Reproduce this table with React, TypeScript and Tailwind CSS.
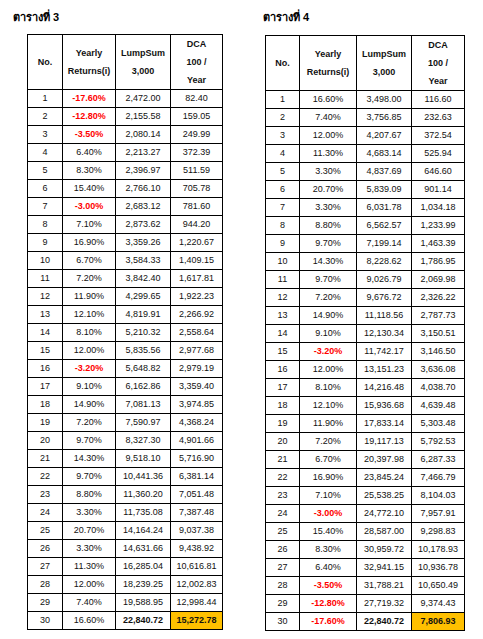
import React from "react"

type Row = [string, string, string]

const table3: Row[] = [
  ["-17.60%", "2,472.00", "82.40"],
  ["-12.80%", "2,155.58", "159.05"],
  ["-3.50%", "2,080.14", "249.99"],
  ["6.40%", "2,213.27", "372.39"],
  ["8.30%", "2,396.97", "511.59"],
  ["15.40%", "2,766.10", "705.78"],
  ["-3.00%", "2,683.12", "781.60"],
  ["7.10%", "2,873.62", "944.20"],
  ["16.90%", "3,359.26", "1,220.67"],
  ["6.70%", "3,584.33", "1,409.15"],
  ["7.20%", "3,842.40", "1,617.81"],
  ["11.90%", "4,299.65", "1,922.23"],
  ["12.10%", "4,819.91", "2,266.92"],
  ["8.10%", "5,210.32", "2,558.64"],
  ["12.00%", "5,835.56", "2,977.68"],
  ["-3.20%", "5,648.82", "2,979.19"],
  ["9.10%", "6,162.86", "3,359.40"],
  ["14.90%", "7,081.13", "3,974.85"],
  ["7.20%", "7,590.97", "4,368.24"],
  ["9.70%", "8,327.30", "4,901.66"],
  ["14.30%", "9,518.10", "5,716.90"],
  ["9.70%", "10,441.36", "6,381.14"],
  ["8.80%", "11,360.20", "7,051.48"],
  ["3.30%", "11,735.08", "7,387.48"],
  ["20.70%", "14,164.24", "9,037.38"],
  ["3.30%", "14,631.66", "9,438.92"],
  ["11.30%", "16,285.04", "10,616.81"],
  ["12.00%", "18,239.25", "12,002.83"],
  ["7.40%", "19,588.95", "12,998.44"],
  ["16.60%", "22,840.72", "15,272.78"],
]

const table4: Row[] = [
  ["16.60%", "3,498.00", "116.60"],
  ["7.40%", "3,756.85", "232.63"],
  ["12.00%", "4,207.67", "372.54"],
  ["11.30%", "4,683.14", "525.94"],
  ["3.30%", "4,837.69", "646.60"],
  ["20.70%", "5,839.09", "901.14"],
  ["3.30%", "6,031.78", "1,034.18"],
  ["8.80%", "6,562.57", "1,233.99"],
  ["9.70%", "7,199.14", "1,463.39"],
  ["14.30%", "8,228.62", "1,786.95"],
  ["9.70%", "9,026.79", "2,069.98"],
  ["7.20%", "9,676.72", "2,326.22"],
  ["14.90%", "11,118.56", "2,787.73"],
  ["9.10%", "12,130.34", "3,150.51"],
  ["-3.20%", "11,742.17", "3,146.50"],
  ["12.00%", "13,151.23", "3,636.08"],
  ["8.10%", "14,216.48", "4,038.70"],
  ["12.10%", "15,936.68", "4,639.48"],
  ["11.90%", "17,833.14", "5,303.48"],
  ["7.20%", "19,117.13", "5,792.53"],
  ["6.70%", "20,397.98", "6,287.33"],
  ["16.90%", "23,845.24", "7,466.79"],
  ["7.10%", "25,538.25", "8,104.03"],
  ["-3.00%", "24,772.10", "7,957.91"],
  ["15.40%", "28,587.00", "9,298.83"],
  ["8.30%", "30,959.72", "10,178.93"],
  ["6.40%", "32,941.15", "10,936.78"],
  ["-3.50%", "31,788.21", "10,650.49"],
  ["-12.80%", "27,719.32", "9,374.43"],
  ["-17.60%", "22,840.72", "7,806.93"],
]

interface ITableProps {
  rows: Row[]
  widths: [string, string, string, string]
}

function ReturnsTable({ rows, widths }: ITableProps) {
  const cell = "border border-black text-center p-0"
  return (
    <table className="table-fixed border-collapse text-[9px] text-[#111]">
      <colgroup>
        <col className={widths[0]} />
        <col className={widths[1]} />
        <col className={widths[2]} />
        <col className={widths[3]} />
      </colgroup>
      <thead>
        <tr className="h-[55px] font-bold leading-[18px]">
          <th className={cell}>No.</th>
          <th className={cell}>
            Yearly
            <br />
            Returns(i)
          </th>
          <th className={cell}>
            LumpSum
            <br />
            3,000
          </th>
          <th className={cell}>
            DCA
            <br />
            100 /
            <br />
            Year
          </th>
        </tr>
      </thead>
      <tbody className="leading-[17px]">
        {rows.map((r, i) => {
          const last = i === rows.length - 1
          const negative = r[0].startsWith("-")
          return (
            <tr key={i} className="h-[18px]">
              <td className={cell}>{i + 1}</td>
              <td className={`${cell} ${negative ? "text-[#ff0000] font-bold" : ""}`}>{r[0]}</td>
              <td className={`${cell} ${last ? "font-bold" : ""}`}>{r[1]}</td>
              <td className={`${cell} ${last ? "bg-[#ffc000] font-bold" : ""}`}>{r[2]}</td>
            </tr>
          )
        })}
      </tbody>
    </table>
  )
}

export default function App() {
  return (
    <div className="flex w-[483px] bg-white pl-[13px] pt-[10px] font-['Liberation_Sans',Arial,sans-serif]">
      <div className="w-[250px] shrink-0 flex flex-col">
        <div className="h-[24px] shrink-0 text-[11px] font-bold leading-[14px]">ตารางที่ 3</div>
        <div className="ml-[14px]">
          <ReturnsTable rows={table3} widths={["w-[35px]", "w-[53px]", "w-[55px]", "w-[52px]"]} />
        </div>
      </div>
      <div className="flex flex-col">
        <div className="h-[25px] shrink-0 text-[11px] font-bold leading-[14px]">ตารางที่ 4</div>
        <div className="ml-[2px]">
          <ReturnsTable rows={table4} widths={["w-[34px]", "w-[57px]", "w-[55px]", "w-[53px]"]} />
        </div>
      </div>
    </div>
  )
}
